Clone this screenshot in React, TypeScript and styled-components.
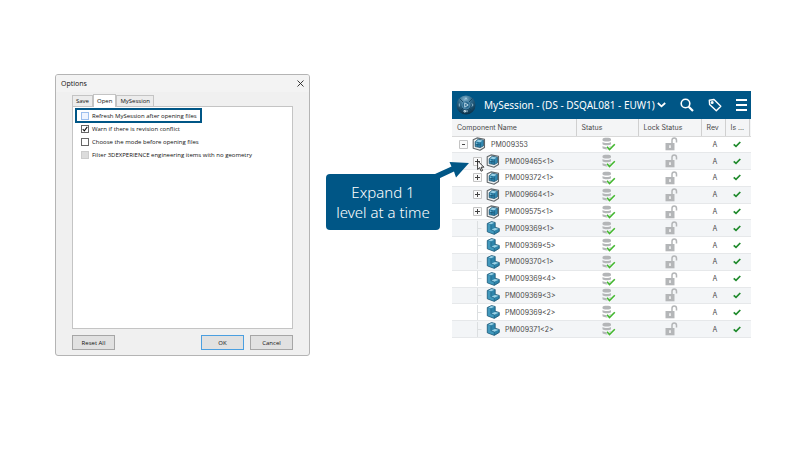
import React, { useState } from "react";
import styled, { createGlobalStyle, css } from "styled-components";

const navy = "#005686";

const GlobalStyle = createGlobalStyle`
  *, *::before, *::after { box-sizing: border-box; }
  body { margin: 0; background: #fff; }
`;

const Page = styled.main`
  display: grid;
  grid-template-columns: minmax(0, 255fr) minmax(0, 118fr) minmax(0, 299fr);
  column-gap: 12px;
  align-items: start;
  padding: 74px 49px 0 55px;
`;

/* Options dialog */

const Dialog = styled.section`
  display: flex;
  flex-direction: column;
  border: 1px solid #b4b4b4;
  border-radius: 3px;
  background: #f0f0f0;
  color: #111;
  font: 6px/8px "Open Sans", "Noto Sans", sans-serif;
  overflow: hidden;
`;

const TitleBar = styled.header`
  display: flex;
  align-items: center;
  justify-content: space-between;
  height: 17px;
  padding: 0 5px;
  background: #f3f3f3;
`;

const DialogTitle = styled.h1`
  margin: 0;
  font-size: 7px;
  font-weight: 400;
`;

const IconButton = styled.button`
  display: flex;
  padding: 0;
  border: 0;
  background: none;
  color: inherit;
`;

const DialogBody = styled.div`
  padding: 2px 16px 4px;
`;

const TabList = styled.div`
  display: flex;
  align-items: flex-end;
`;

const Tab = styled.button<{ $active?: boolean }>`
  height: ${(p) => (p.$active ? 13 : 11)}px;
  margin-bottom: ${(p) => (p.$active ? -1 : 0)}px;
  padding: 0 3px;
  border: 1px solid #c4c4c4;
  border-bottom: 0;
  background: ${(p) => (p.$active ? "#fff" : "#ececec")};
  color: inherit;
  font: inherit;
  white-space: nowrap;
`;

const TabPanel = styled.div`
  min-height: 223px;
  padding: 2px 3px;
  border: 1px solid #c4c4c4;
  background: #fff;
`;

const Option = styled.label<{ $highlight?: boolean }>`
  display: flex;
  align-items: center;
  gap: 3px;
  width: fit-content;
  height: 13px;
  padding: 0 5px;
  white-space: nowrap;
  ${(p) =>
    p.$highlight &&
    css`
      width: 125px;
      outline: 2px solid ${navy};
      outline-offset: -1px;
    `}
`;

const CheckBox = styled.input<{ $tone?: string }>`
  appearance: none;
  width: 8px;
  height: 8px;
  margin: 0;
  border: 1px solid ${(p) => p.$tone ?? "#666"};
  background: ${(p) => (p.$tone ? "#eef4ff" : "#fff")};
  &:disabled {
    border-color: #ccc;
    background: #dcdcdc;
  }
`;

const CheckCell = styled.span`
  position: relative;
  display: flex;
  svg {
    position: absolute;
    inset: 0;
    pointer-events: none;
  }
`;

const DialogActions = styled.footer`
  display: flex;
  gap: 6px;
  padding: 2px 16px 5px;
`;

const DialogButton = styled.button<{ $primary?: boolean; $first?: boolean }>`
  width: 43px;
  height: 15px;
  margin-right: ${(p) => (p.$first ? "auto" : 0)};
  padding: 0;
  border: 1px solid ${(p) => (p.$primary ? "#4b9fe0" : "#a6a6a6")};
  background: #e1e1e1;
  color: inherit;
  font: inherit;
`;

/* Callout */

const Callout = styled.aside`
  position: relative;
  margin: 100px 0 0 4px;
  padding: 8px 0;
  border-radius: 4px;
  background: ${navy};
  color: #fff;
  font: 300 15px/20px "Noto Sans", "Open Sans", sans-serif;
  text-align: center;
  white-space: nowrap;
`;

const Arrow = styled.svg`
  position: absolute;
  left: 100%;
  bottom: 100%;
  margin: 0 0 -12px -10px;
  z-index: 1;
`;

/* Session panel */

const Panel = styled.section`
  margin-top: 17px;
  color: #4a4a4a;
  font: 7px/9px Inter, "Liberation Sans", sans-serif;
`;

const PanelBar = styled.header`
  display: flex;
  align-items: center;
  height: 28px;
  padding: 0 4px;
  background: ${navy};
  color: #fff;
`;

const PanelTitle = styled.button`
  display: flex;
  align-items: center;
  gap: 2px;
  margin: 0 auto 0 8px;
  padding: 0;
  border: 0;
  background: none;
  color: inherit;
  font: 10px/16px "Noto Sans", "Open Sans", sans-serif;
  white-space: nowrap;
`;

const Tools = styled.div`
  display: flex;
  align-items: center;
  gap: 14px;
`;

const Table = styled.table`
  width: 100%;
  height: 219px;
  table-layout: fixed;
  border-collapse: collapse;
`;

const HeadCell = styled.th`
  height: 17px;
  padding: 0 5px;
  border-right: 1px solid #d0d0d0;
  border-bottom: 1px solid #d9d9d9;
  background: #f4f5f6;
  font-weight: 400;
  text-align: left;
  white-space: nowrap;
  &:last-child {
    border-right: 0;
    padding: 0;
  }
`;

const Row = styled.tr`
  border-bottom: 1px solid #e6e8ea;
  &:nth-child(even) {
    background: #f3f5f7;
  }
`;

const Cell = styled.td<{ $inset?: boolean }>`
  padding: 0 0 0 ${(p) => (p.$inset ? 4 : 0)}px;
  text-align: center;
  svg {
    display: block;
    margin: 0 auto;
  }
`;

const NameCell = styled.div<{ $level: number }>`
  display: flex;
  align-items: center;
  gap: 4px;
  height: 15px;
  padding-left: ${(p) => (p.$level ? 21 : 7)}px;
  svg {
    margin: 0;
  }
`;

const NodeName = styled.span`
  margin-left: 1px;
`;

const Toggle = styled.button`
  position: relative;
  display: flex;
  padding: 0;
  border: 0;
  background: none;
`;

const Cursor = styled.svg`
  position: absolute;
  left: 4px;
  top: 3px;
  z-index: 2;
`;

const CloseIcon = () => (
  <svg width="7" height="7" viewBox="0 0 7 7" stroke="#222" strokeWidth="0.9">
    <path d="M.5 .5l6 6M6.5 .5l-6 6" />
  </svg>
);

const Tick = () => (
  <svg width="8" height="8" viewBox="0 0 8 8" fill="none" stroke="#111" strokeWidth="1.1">
    <path d="M1.7 4l1.6 1.8 3-4" />
  </svg>
);

const Compass = () => (
  <svg width="20" height="20" viewBox="0 0 20 20">
    <defs>
      <radialGradient id="compass" cx="45%" cy="20%" r="80%">
        <stop offset="0" stopColor="#7fb0cb" />
        <stop offset=".45" stopColor="#2b6688" />
        <stop offset="1" stopColor="#0a3048" />
      </radialGradient>
    </defs>
    <circle cx="10" cy="10" r="9.5" fill="url(#compass)" />
    <path d="M3.5 3.5l4 4M16.5 3.5l-4 4M3.5 16.5l4-4M16.5 16.5l-4-4" stroke="#0d3f5e" strokeWidth=".8" />
    <circle cx="10" cy="10" r="4" fill="#2a6a90" stroke="#5c94b4" strokeWidth=".7" />
    <path d="M8.7 7.8l3.5 2.2-3.5 2.2z" fill="none" stroke="#d8ecf6" strokeWidth=".8" />
    <path d="M9 4.5l1-1.800 1 1.800M3.300 8.500v3M16 8.500l1 1.500-1 1.500" fill="none" stroke="#a9cfe2" strokeWidth=".8" />
    <path d="M8 15.500h1.500v1.500H8zM11 15.200v2" fill="none" stroke="#d3e6f0" strokeWidth=".9" />
  </svg>
);

const Assembly = () => (
  <svg width="14" height="14" viewBox="0 0 14 14" strokeLinejoin="round">
    <path d="M1.200 2.800L5 .9l7.500 1.300v8.300L8 13.300 1.200 11.300z" fill="#eef1f2" stroke="#62676a" strokeWidth="1.100" />
    <path d="M3.200 4.800L6.200 2.200l5.300 1v5.600L8.300 10.600l-5.100-1z" fill="#3087b0" stroke="#184d69" strokeWidth=".7" />
    <path d="M3.900 4.600l2.500-1.800 4.200.8-2.300 1.700z" fill="#9ad0e5" />
    <path d="M3.200 7l5.100 1M8.300 5.500v5M5.800 5v4.800" fill="none" stroke="#184d69" strokeWidth=".6" />
    <path d="M3.900 5.600l1.500.3v1.200l-1.500-.3z" fill="#7fc0da" />
  </svg>
);

const Part = () => (
  <svg width="14" height="14" viewBox="0 0 14 14" strokeLinejoin="round">
    <path d="M1.300 2.500L5.500.6l3.700.9v4.800l4.100 1.200v2.900L8.300 13.400l-7-2.600z" fill="#2d84aa" stroke="#1b5472" strokeWidth=".8" />
    <path d="M1.800 2.900l3 .8v5L8 10.100v2.700L1.800 10.500z" fill="#4299bd" />
    <path d="M2.300 2.500L5.500 1.100l3 .7-3.400 1.400z" fill="#9bd2e6" />
    <path d="M5.300 8.400l3.700-1.500 3.700.9-4.400 2z" fill="#9bd2e6" />
    <path d="M4.900 3.700v5L8.200 10v3" fill="none" stroke="#1b5472" strokeWidth=".5" />
  </svg>
);

const Database = () => (
  <svg width="14" height="14" viewBox="0 0 14 14">
    <path d="M.5 2.200C.5.300 9 .300 9 2.200v1C9 5 .5 5 .5 3.200zM.5 5c1.500 1.300 7 1.300 8.500 0v2.200c-1.500 1.500-7 1.500-8.500 0zM.5 9c1.500 1.300 7 1.300 8.500 0v2.300c-1.500 1.500-7 1.500-8.500 0z" fill="#b4b6b8" />
    <path d="M5 9.800l2.500 2.700L12.800 7.300" fill="none" stroke="#fff" strokeWidth="2.500" />
    <path d="M5 9.800l2.500 2.700L12.800 7.300" fill="none" stroke="#42b62f" strokeWidth="1.600" />
  </svg>
);

const Unlocked = () => (
  <svg width="13" height="14" viewBox="0 0 13 14">
    <path d="M7 6V3.300C7 .3 11.500.3 11.500 3.300V5.500" fill="none" stroke="#b4b6b8" strokeWidth="1.500" />
    <path d="M.5 6h9v7.300h-9z" fill="#b4b6b8" />
    <path d="M4.300 8.300h1.400v2.700H4.300z" fill="#fff" />
  </svg>
);

const GreenTick = () => (
  <svg width="8" height="7" viewBox="0 0 8 7" fill="none" stroke="#1f8a2c" strokeWidth="1.700">
    <path d="M.7 3.300l2.300 2L7.300 1" />
  </svg>
);

const Expander = ({ open }: { open?: boolean }) => (
  <svg width="9" height="9" viewBox="0 0 9 9">
    <path d="M.5.5h8v8h-8z" fill="#fafafa" stroke="#c4c4c4" />
    <path d={open ? "M3 4.500h3" : "M2 4.500h5M4.500 2v5"} stroke="#444" />
  </svg>
);

const Branch = () => (
  <svg width="9" height="15" viewBox="0 0 9 15">
    <path d="M4.500 0v15M4.500 7.500h4" fill="none" stroke="#dcdfe1" />
  </svg>
);

type Kind = "root" | "assembly" | "part";

const components: { name: string; kind: Kind }[] = [
  { name: "PM009353", kind: "root" },
  { name: "PM009465<1>", kind: "assembly" },
  { name: "PM009372<1>", kind: "assembly" },
  { name: "PM009664<1>", kind: "assembly" },
  { name: "PM009575<1>", kind: "assembly" },
  { name: "PM009369<1>", kind: "part" },
  { name: "PM009369<5>", kind: "part" },
  { name: "PM009370<1>", kind: "part" },
  { name: "PM009369<4>", kind: "part" },
  { name: "PM009369<3>", kind: "part" },
  { name: "PM009369<2>", kind: "part" },
  { name: "PM009371<2>", kind: "part" },
];

const OptionsDialog = () => {
  const [refresh, setRefresh] = useState(false);
  const [warn, setWarn] = useState(true);
  const [choose, setChoose] = useState(false);
  return (
    <Dialog role="dialog" aria-labelledby="options-title">
      <TitleBar>
        <DialogTitle id="options-title">Options</DialogTitle>
        <IconButton aria-label="Close"><CloseIcon /></IconButton>
      </TitleBar>
      <DialogBody>
        <TabList role="tablist">
          <Tab role="tab">Save</Tab>
          <Tab role="tab" aria-selected $active>Open</Tab>
          <Tab role="tab">MySession</Tab>
        </TabList>
        <TabPanel role="tabpanel">
          <Option $highlight>
            <CheckCell>
              <CheckBox type="checkbox" $tone="#9dbfee" checked={refresh} onChange={() => setRefresh(!refresh)} />
              {refresh && <Tick />}
            </CheckCell>
            Refresh MySession after opening files
          </Option>
          <Option>
            <CheckCell>
              <CheckBox type="checkbox" checked={warn} onChange={() => setWarn(!warn)} />
              {warn && <Tick />}
            </CheckCell>
            Warn if there is revision conflict
          </Option>
          <Option>
            <CheckCell>
              <CheckBox type="checkbox" checked={choose} onChange={() => setChoose(!choose)} />
              {choose && <Tick />}
            </CheckCell>
            Choose the mode before opening files
          </Option>
          <Option>
            <CheckCell><CheckBox type="checkbox" disabled /></CheckCell>
            Filter 3DEXPERIENCE engineering items with no geometry
          </Option>
        </TabPanel>
      </DialogBody>
      <DialogActions>
        <DialogButton $first>Reset All</DialogButton>
        <DialogButton $primary>OK</DialogButton>
        <DialogButton>Cancel</DialogButton>
      </DialogActions>
    </Dialog>
  );
};

const SessionPanel = () => (
  <Panel>
    <PanelBar>
      <Compass />
      <PanelTitle>
        MySession - (DS - DSQAL081 - EUW1)
        <svg width="9" height="6" viewBox="0 0 9 6" fill="none" stroke="currentColor" strokeWidth="1.8">
          <path d="M.8 1l3.700 3.300L8.200 1" />
        </svg>
      </PanelTitle>
      <Tools>
        <IconButton aria-label="Search">
          <svg width="14" height="14" viewBox="0 0 14 14" fill="none" stroke="currentColor">
            <circle cx="5.5" cy="5.5" r="4.3" strokeWidth="1.6" />
            <path d="M8.700 8.700l4.300 4.300" strokeWidth="2.200" />
          </svg>
        </IconButton>
        <IconButton aria-label="Tags">
          <svg width="14" height="14" viewBox="0 0 14 14" fill="none" stroke="currentColor" strokeWidth="1.400" strokeLinejoin="round">
            <path d="M1.300 2.200l4.700-.7 6.800 6.800-4.500 4.500L1.600 6.500z" />
            <circle cx="4.2" cy="4.4" r=".8" />
          </svg>
        </IconButton>
        <IconButton aria-label="Menu">
          <svg width="11" height="12" viewBox="0 0 11 12" stroke="currentColor" strokeWidth="2">
            <path d="M0 1h11M0 6h11M0 11h11" />
          </svg>
        </IconButton>
      </Tools>
    </PanelBar>
    <Table>
      <colgroup>
        <col />
        <col width="62" />
        <col width="63" />
        <col width="24" />
        <col width="24" />
        <col width="2" />
      </colgroup>
      <thead>
        <tr>
          <HeadCell>Component Name</HeadCell>
          <HeadCell>Status</HeadCell>
          <HeadCell>Lock Status</HeadCell>
          <HeadCell>Rev</HeadCell>
          <HeadCell>Is ...</HeadCell>
          <HeadCell />
        </tr>
      </thead>
      <tbody>
        {components.map(({ name, kind }, i) => (
          <Row key={name}>
            <Cell>
              <NameCell $level={kind === "root" ? 0 : 1}>
                {kind === "part" ? (
                  <Branch />
                ) : (
                  <Toggle aria-label={`Toggle ${name}`}>
                    <Expander open={kind === "root"} />
                    {i === 1 && (
                      <Cursor width="8" height="12" viewBox="0 0 8 12">
                        <path d="M.6.8v8.700l2-1.800 1.500 3.500 1.500-.7-1.500-3.300h2.800z" fill="#fff" stroke="#222" strokeWidth=".9" />
                      </Cursor>
                    )}
                  </Toggle>
                )}
                {kind === "part" ? <Part /> : <Assembly />}
                <NodeName>{name}</NodeName>
              </NameCell>
            </Cell>
            <Cell $inset><Database /></Cell>
            <Cell $inset><Unlocked /></Cell>
            <Cell $inset>A</Cell>
            <Cell><GreenTick /></Cell>
            <Cell />
          </Row>
        ))}
      </tbody>
    </Table>
  </Panel>
);

export default function App() {
  return (
    <>
      <GlobalStyle />
      <Page>
        <OptionsDialog />
        <Callout>
          Expand 1<br />level at a time
          <Arrow width="40" height="28" viewBox="0 0 40 28">
            <path d="M5 16L21.500 8.500 19.500 4 39 5 26 19.500 24 13.500 8 21z" fill={navy} />
          </Arrow>
        </Callout>
        <SessionPanel />
      </Page>
    </>
  );
}
